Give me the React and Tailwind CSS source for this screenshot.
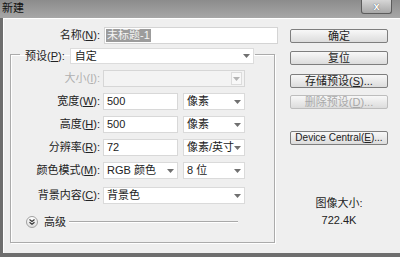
import React from "react";

const Arrow = ({ light }) => (
  <svg width="7" height="4" viewBox="0 0 7 4" className="shrink-0">
    <path d="M0 0h7L3.5 4z" fill={light ? "#b4b4b4" : "#707070"} />
  </svg>
);

const Select = ({ value, w, disabled }) => (
  <div
    className={`${w} h-[17px] flex items-center justify-between pl-[3px] pr-[3px] border overflow-hidden ${
      disabled ? "bg-[#f3f3f3] border-[#d6d6d6]" : "bg-white border-[#dadada]"
    }`}>
    <span className="whitespace-nowrap">{value}</span>
    {disabled ? (
      <div className="w-[11px] h-[13px] -mr-[1px] border border-[#dcdcdc] bg-[#f8f8f8] flex items-center justify-center">
        <Arrow light />
      </div>
    ) : (
      <Arrow />
    )}
  </div>
);

const Input = ({ value, w }) => (
  <div className={`${w} h-[17px] flex items-center pl-[3px] bg-white border border-[#d8d8d8]`}>
    {value}
  </div>
);

const Row = ({ label, children, className, disabled }) => (
  <div className={`flex items-center h-[17px] ${className}`}>
    <div className={`w-[89px] text-right whitespace-nowrap ${disabled ? "text-[#b0b0b0]" : ""}`}>{label}</div>
    <div className="ml-[3px] flex gap-[5px]">{children}</div>
  </div>
);

const Button = ({ children, className, disabled }) => (
  <div
    className={`w-[98px] h-[14px] flex items-center justify-center whitespace-nowrap rounded-[2px] border bg-gradient-to-b from-[#f8f8f8] to-[#dcdcdc] ${
      disabled ? "border-[#bdbdbd] text-[#a8a8a8]" : "border-[#7e7e7e]"
    } ${className}`}>
    {children}
  </div>
);

export default function App() {
  return (
    <div className="w-[400px] h-[257px] overflow-hidden bg-[#6e6e6e] font-['Liberation_Sans','Noto_Sans_CJK_SC',sans-serif] text-[11px] leading-none text-[#222]">
      {/* title bar */}
      <div className="h-[18px] flex items-start justify-between bg-gradient-to-b from-[#8c8c8c] to-[#a7a7a7]">
        <span className="mt-[3px] ml-[2px] text-[#111]">新建</span>
        <div className="mr-[8px] w-[31px] h-[14px] rounded-b-[3px] border border-t-0 border-[#5c5c5c] bg-gradient-to-b from-[#d6d6d6] to-[#a8a8a8] flex items-center justify-center">
          <span className="text-white font-bold text-[11px] [text-shadow:0_0_1px_#333]">x</span>
        </div>
      </div>

      <div className="h-[235px] ml-[3px] flex bg-[#efefef] border-t border-l border-white">
        {/* left column */}
        <div className="w-[276px] flex flex-col">
          <div className="mt-[8px] flex items-center h-[17px]">
            <div className="w-[96px] text-right whitespace-nowrap">
              名称(<u>N</u>):
            </div>
            <div className="ml-[4px] w-[174px] h-[17px] flex items-center pl-[1px] bg-white border border-[#d4d4d4]">
              <span className="bg-[#9c9c9c] text-[#f4f4f4] px-[1px] py-[1px]">未标题-1</span>
            </div>
          </div>

          <fieldset className="ml-[6px] w-[265px] border border-[#ababab] shadow-[1px_1px_0_#fff,inset_1px_1px_0_#fff] pb-[13px]">
            <legend className="ml-[9px] pl-[5px] pr-[1px] pt-[4px] flex items-center">
              <span className="whitespace-nowrap">
                预设(<u>P</u>):
              </span>
              <div className="ml-[5px] w-[184px] h-[16px] flex items-center justify-between pl-[4px] pr-[3px] bg-white border border-[#dcdcdc]">
                <span>自定</span>
                <Arrow />
              </div>
            </legend>

            <Row className="mt-[6px]" disabled label={<>大小(<u>I</u>):</>}>
              <Select w="w-[142px]" value="" disabled />
            </Row>
            <Row className="mt-[6px]" label={<>宽度(<u>W</u>):</>}>
              <Input w="w-[75px]" value="500" />
              <Select w="w-[62px]" value="像素" />
            </Row>
            <Row className="mt-[6px]" label={<>高度(<u>H</u>):</>}>
              <Input w="w-[75px]" value="500" />
              <Select w="w-[62px]" value="像素" />
            </Row>
            <Row className="mt-[6px]" label={<>分辨率(<u>R</u>):</>}>
              <Input w="w-[75px]" value="72" />
              <Select w="w-[62px]" value="像素/英寸" />
            </Row>
            <Row className="mt-[6px]" label={<>颜色模式(<u>M</u>):</>}>
              <Select w="w-[75px]" value="RGB 颜色" />
              <Select w="w-[62px]" value="8 位" />
            </Row>
            <Row className="mt-[8px]" label={<>背景内容(<u>C</u>):</>}>
              <Select w="w-[142px]" value="背景色" />
            </Row>

            {/* advanced */}
            <div className="mt-[11px] h-[14px] flex items-center pl-[15px]">
              <div className="w-[12px] h-[12px] rounded-full border border-[#a0a0a0] bg-gradient-to-b from-white to-[#dedede] flex items-center justify-center">
                <svg width="6" height="6" viewBox="0 0 6 6">
                  <path d="M0.5 0.5L3 2.5L5.5 0.5M0.5 3.2L3 5.2L5.5 3.2" fill="none" stroke="#333" strokeWidth="1.1" />
                </svg>
              </div>
              <span className="ml-[6px]">高级</span>
              <div className="flex-1 ml-[3px] mr-[36px] h-[2px] border-t border-[#a9a9a9] border-b border-b-white" />
            </div>
          </fieldset>
        </div>

        {/* right column */}
        <div className="flex flex-col pl-[10px]">
          <Button className="mt-[10px]">确定</Button>
          <Button className="mt-[8px]">复位</Button>
          <Button className="mt-[9px]">存储预设(<u>S</u>)...</Button>
          <Button className="mt-[7px]" disabled>
            删除预设(<u>D</u>)...
          </Button>
          <Button className="mt-[22px] text-[10px]">
            Device Central(<u>E</u>)...
          </Button>
          <div className="mt-[53px] w-[98px] text-center">图像大小:</div>
          <div className="mt-[6px] w-[98px] text-center">722.4K</div>
        </div>
      </div>
    </div>
  );
}
